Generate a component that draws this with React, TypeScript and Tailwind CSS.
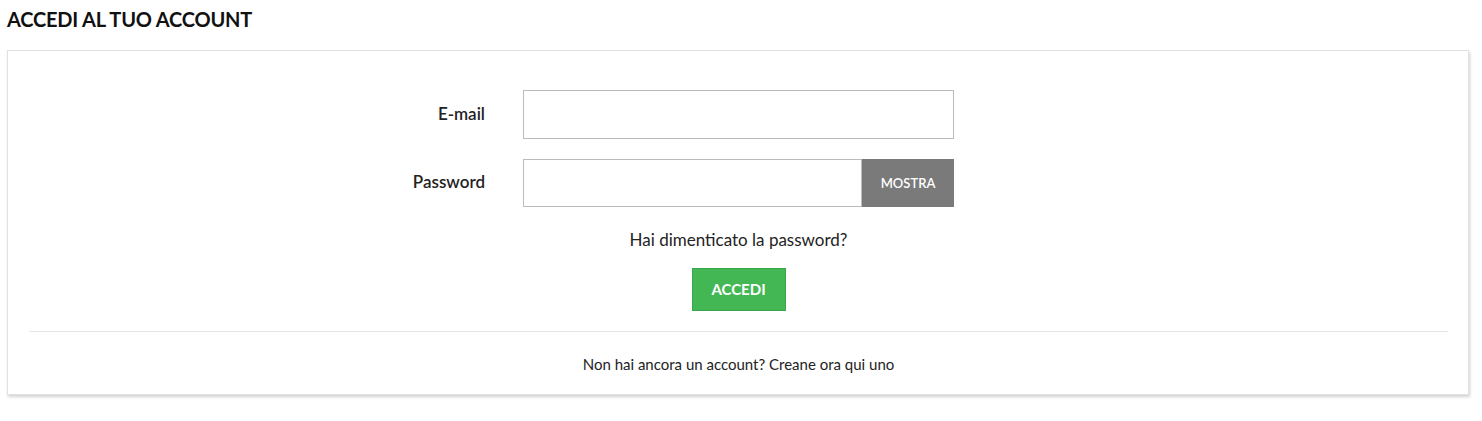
import React from "react";

export default function App() {
  const font = { fontFamily: "Lato, 'Open Sans', sans-serif" };
  return (
    <div className="bg-white w-[1482px] h-[421px] text-[#232323]" style={font}>
      <div className="pl-[7px] pr-[13px]">
        <h1 className="pt-[7px] h-[50px] text-[20px] leading-[24px] font-bold tracking-[-0.2px] text-[#111]">
          ACCEDI AL TUO ACCOUNT
        </h1>
        <div className="border border-[#e1e1e1] shadow-[1px_2px_3px_rgba(0,0,0,0.18)] bg-white pt-[39px] pl-[21px] pr-[20px] h-[345px]">
          <div className="grid grid-cols-[1fr_431px_1fr] items-center">
            <label className="text-right pr-[38px] text-[17px] leading-[22px] font-semibold -mt-[2px]">E-mail</label>
            <input
              type="email"
              className="h-[49px] border border-[#bbbbbb] bg-white outline-none"
            />
            <div />
          </div>
          <div className="grid grid-cols-[1fr_431px_1fr] items-center mt-[20px]">
            <label className="text-right pr-[38px] text-[17px] leading-[22px] font-semibold -mt-[2px]">Password</label>
            <div className="flex h-[48px]">
              <input
                type="password"
                className="flex-1 min-w-0 h-full border border-[#bbbbbb] bg-white outline-none"
              />
              <button className="w-[92px] h-full bg-[#7a7a7a] text-white text-[13px] font-semibold uppercase pt-[2px]">
                Mostra
              </button>
            </div>
            <div />
          </div>
          <div className="flex justify-center mt-[21px]">
            <a className="text-[17px] leading-[24px] text-[#232323]">Hai dimenticato la password?</a>
          </div>
          <div className="flex justify-center mt-[16px]">
            <button className="w-[94px] h-[43px] bg-[#43b754] border border-[#3aa54b] text-white text-[15px] font-bold uppercase">
              Accedi
            </button>
          </div>
          <hr className="mt-[20px] border-0 border-t border-[#e5e5e5]" />
          <div className="flex justify-center mt-[22px]">
            <a className="text-[15px] leading-[20px] text-[#232323]">Non hai ancora un account? Creane ora qui uno</a>
          </div>
        </div>
      </div>
    </div>
  );
}
